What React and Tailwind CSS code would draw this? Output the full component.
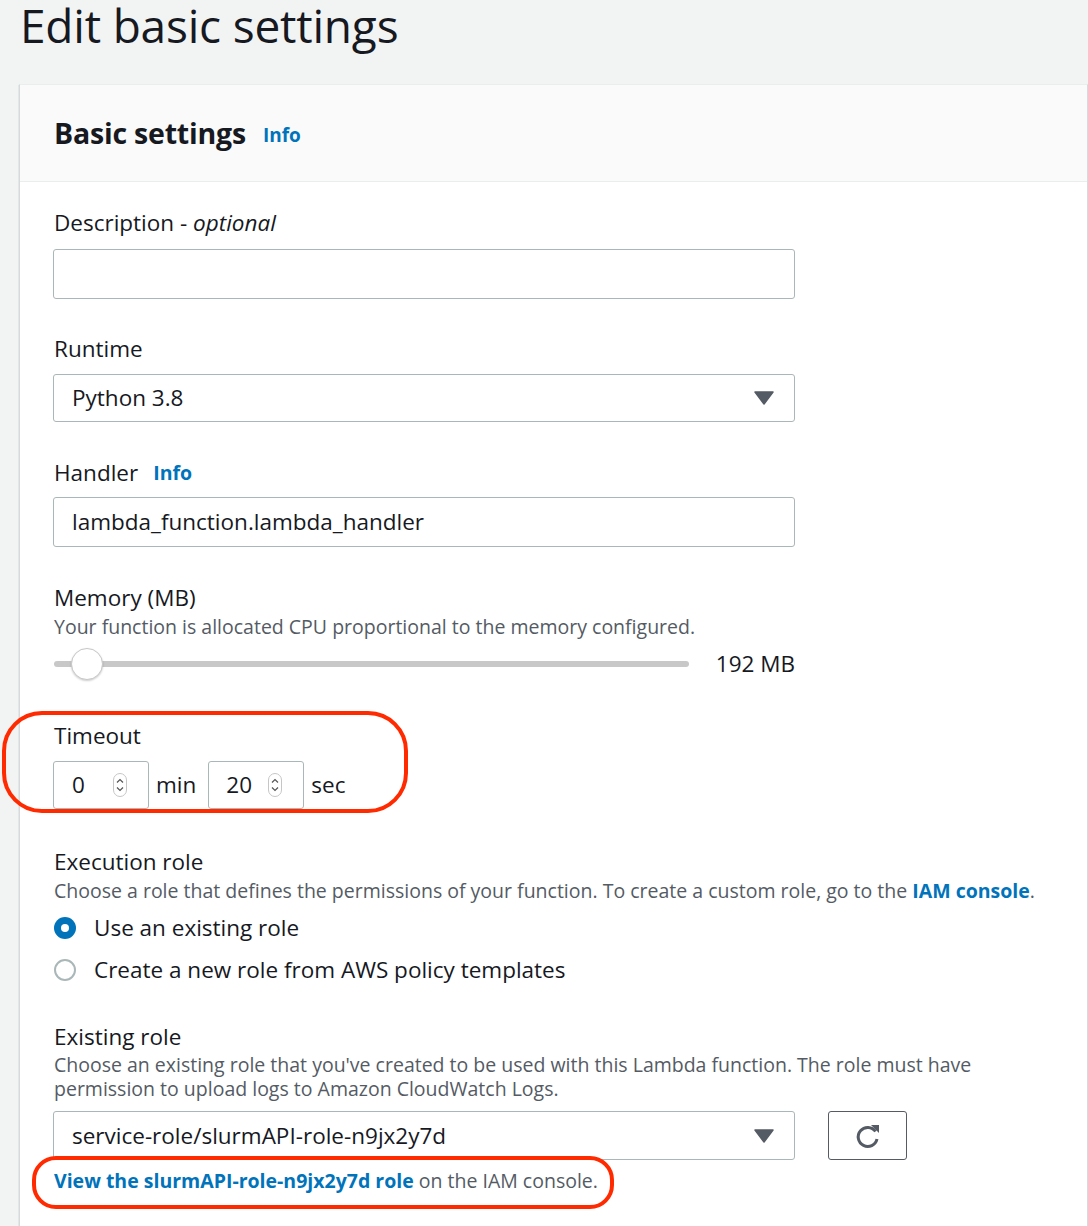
import React from "react";

const font = { fontFamily: '"Open Sans", "Noto Sans", Arial, sans-serif' };

function Caret() {
  return (
    <svg width="20" height="14" viewBox="0 0 20 14" className="shrink-0">
      <path d="M1 1 H19 L10 13 Z" fill="#545b64" stroke="#545b64" strokeWidth="1.5" strokeLinejoin="round" />
    </svg>
  );
}

function Spinner() {
  return (
    <svg width="14" height="24" viewBox="0 0 14 24" className="shrink-0">
      <rect x="0.5" y="0.5" width="13" height="23" rx="6.5" fill="#fff" stroke="#c6c6c6" />
      <path d="M4 9.5 L7 6.5 L10 9.5" fill="none" stroke="#555" strokeWidth="1.2" />
      <path d="M4 14.5 L7 17.5 L10 14.5" fill="none" stroke="#555" strokeWidth="1.2" />
    </svg>
  );
}

export default function App() {
  return (
    <div className="w-[1088px] h-[1226px] bg-[#f2f3f3] overflow-hidden text-[#16191f]" style={font}>
      <div className="pl-[20px]">
        <h1 className="text-[46px] leading-[50px] tracking-[-0.2px]">Edit basic settings</h1>
        <div className="mt-[34px] ml-[-1px] bg-white border-l border-r border-[#d5dbdb] border-t border-t-[#eaeded] shadow-[0_1px_1px_0_rgba(0,28,36,0.3)] min-h-[1200px]">
          <div className="bg-[#fafafa] border-b border-[#eaeded] h-[97px] flex items-center pl-[34px]">
            <span className="text-[28.5px] font-bold tracking-[-0.2px]">Basic settings</span>
            <span className="ml-[17px] mt-[4px] text-[19px] font-bold text-[#0073bb]">Info</span>
          </div>

          <div className="pl-[33px] pt-[25px]">
            {/* Description */}
            <div className="text-[22.5px] leading-[32px] pl-[1px]">
              Description - <i>optional</i>
            </div>
            <div className="mt-[10px] w-[742px] h-[50px] border border-[#aab7b8] rounded-[3px] bg-white" />

            {/* Runtime */}
            <div className="mt-[34px] text-[22.5px] leading-[32px] pl-[1px]">Runtime</div>
            <div className="mt-[9px] w-[742px] h-[48px] border border-[#aab7b8] rounded-[3px] bg-white flex items-center justify-between pl-[18px] pr-[20px]">
              <span className="text-[22.5px]">Python 3.8</span>
              <Caret />
            </div>

            {/* Handler */}
            <div className="mt-[35px] text-[22.5px] leading-[32px] pl-[1px] flex items-center">
              <span>Handler</span>
              <span className="ml-[15px] text-[19.5px] font-bold text-[#0073bb]">Info</span>
            </div>
            <div className="mt-[8px] w-[742px] h-[50px] border border-[#aab7b8] rounded-[3px] bg-white flex items-center pl-[18px]">
              <span className="text-[22.5px]">lambda_function.lambda_handler</span>
            </div>

            {/* Memory */}
            <div className="mt-[35px] text-[22.5px] leading-[32px] pl-[1px]">Memory (MB)</div>
            <div className="text-[19.5px] leading-[26px] text-[#545b64] pl-[1px]">
              Your function is allocated CPU proportional to the memory configured.
            </div>
            <div className="mt-[7px] flex items-center w-[742px] h-[34px]">
              <div className="relative w-[635px] h-[6px] rounded-full bg-[#c8c8c8] ml-[1px]">
                <div className="absolute left-[17px] top-[-13px] w-[32px] h-[32px] rounded-full bg-white border border-[#c8c8c8] shadow-[0_1px_2px_rgba(0,0,0,0.2)]" />
              </div>
              <span className="ml-auto text-[22.5px]">192 MB</span>
            </div>

            {/* Timeout */}
            <div className="relative">
              <div className="absolute left-[-51px] top-[30px] w-[406px] h-[102px] border-[4px] border-[#ff2a00] rounded-[40px] pointer-events-none z-10" />
              <div className="pt-[39px] text-[22.5px] leading-[32px] pl-[1px]">Timeout</div>
              <div className="mt-[9px] flex items-center">
                <div className="w-[96px] h-[48px] border border-[#aab7b8] rounded-[3px] bg-white flex items-center justify-between pl-[18px] pr-[21px]">
                  <span className="text-[22.5px]">0</span>
                  <Spinner />
                </div>
                <span className="ml-[7px] text-[22.5px]">min</span>
                <div className="ml-[12px] w-[96px] h-[48px] border border-[#aab7b8] rounded-[3px] bg-white flex items-center justify-between pl-[17px] pr-[21px]">
                  <span className="text-[22.5px]">20</span>
                  <Spinner />
                </div>
                <span className="ml-[7px] text-[22.5px]">sec</span>
              </div>
            </div>

            {/* Execution role */}
            <div className="mt-[37px] text-[22.5px] leading-[32px] pl-[1px]">Execution role</div>
            <div className="text-[19.5px] leading-[26px] text-[#545b64] pl-[1px]">
              Choose a role that defines the permissions of your function. To create a custom role, go to the{" "}
              <span className="font-bold text-[#0073bb]">IAM console</span>.
            </div>
            <div className="mt-[5px] flex items-center h-[38px]">
              <div className="w-[22px] h-[22px] rounded-full bg-[#0073bb] flex items-center justify-center ml-[1px]">
                <div className="w-[8px] h-[8px] rounded-full bg-white" />
              </div>
              <span className="ml-[18px] text-[22.5px]">Use an existing role</span>
            </div>
            <div className="mt-[4px] flex items-center h-[38px]">
              <div className="w-[22px] h-[22px] rounded-full bg-white border-[2px] border-[#aab7b8] ml-[1px]" />
              <span className="ml-[18px] text-[22.5px]">Create a new role from AWS policy templates</span>
            </div>

            {/* Existing role */}
            <div className="mt-[32px] text-[22.5px] leading-[32px] pl-[1px]">Existing role</div>
            <div className="text-[19.5px] leading-[24px] text-[#545b64] pl-[1px] w-[960px]">
              Choose an existing role that you've created to be used with this Lambda function. The role must have permission to upload logs to Amazon CloudWatch Logs.
            </div>
            <div className="mt-[10px] flex items-center">
              <div className="w-[742px] h-[49px] border border-[#aab7b8] rounded-[3px] bg-white flex items-center justify-between pl-[18px] pr-[20px]">
                <span className="text-[22.5px]">service-role/slurmAPI-role-n9jx2y7d</span>
                <Caret />
              </div>
              <div className="ml-[33px] w-[79px] h-[49px] border border-[#545b64] rounded-[3px] bg-white flex items-center justify-center">
                <svg width="30" height="30" viewBox="0 0 30 30">
                  <path d="M22.5 10.5 A9.5 9.5 0 1 0 24 18" fill="none" stroke="#545b64" strokeWidth="3" />
                  <path d="M18 4 H26 V12 Z" fill="#545b64" />
                </svg>
              </div>
            </div>

            {/* Link */}
            <div className="relative mt-[3px] h-[48px]">
              <div className="absolute left-[-21px] top-[-7px] w-[582px] h-[53px] border-[4px] border-[#ff2a00] rounded-[24px] pointer-events-none" />
              <div className="pt-[5px] pl-[1px] text-[19.5px] leading-[26px]">
                <span className="font-bold text-[#0073bb]">View the slurmAPI-role-n9jx2y7d role</span>
                <span className="text-[#545b64]"> on the IAM console.</span>
              </div>
            </div>
          </div>
        </div>
      </div>
    </div>
  );
}
